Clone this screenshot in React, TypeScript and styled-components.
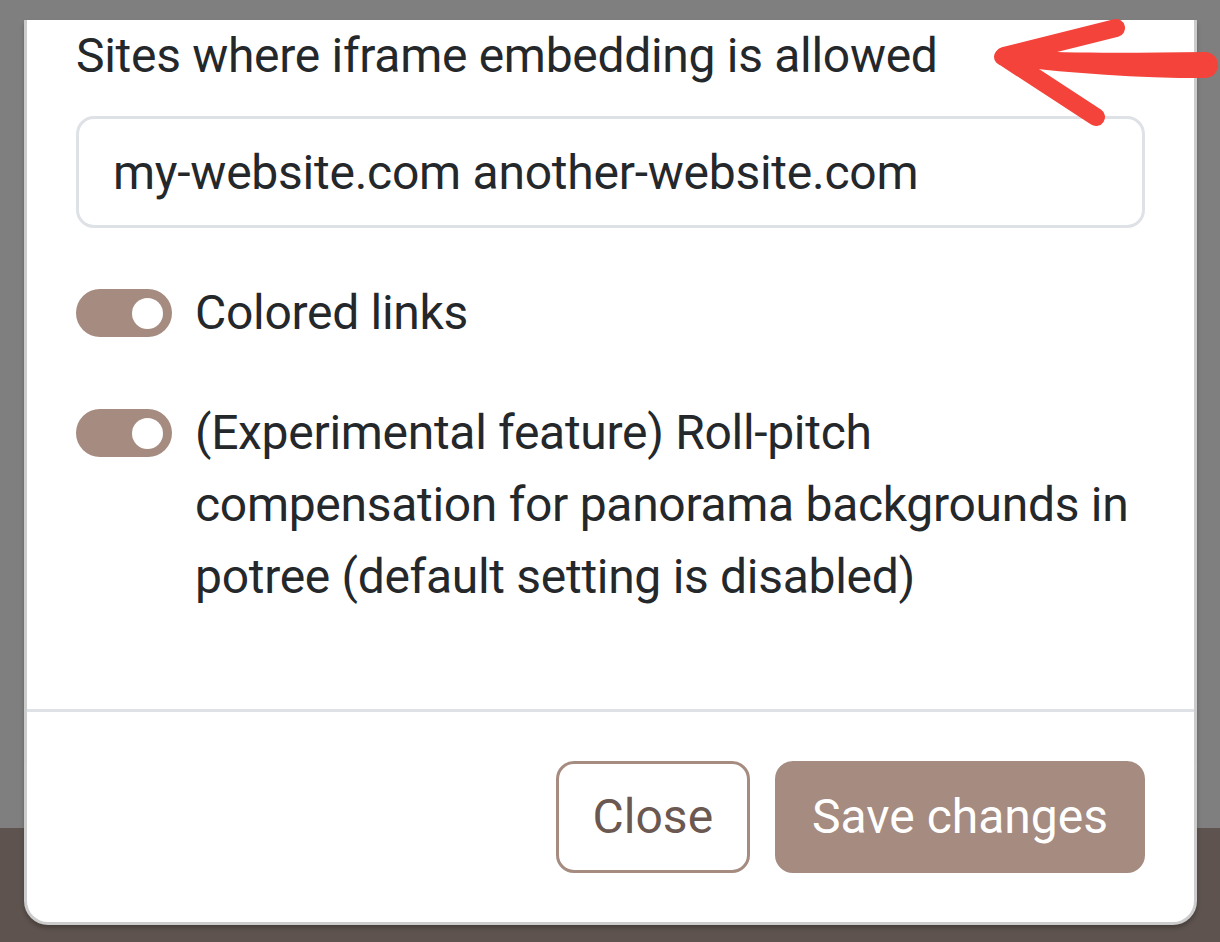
import React from "react";
import styled, { createGlobalStyle } from "styled-components";

const GlobalStyle = createGlobalStyle`
  html, body { margin: 0; padding: 0; }
  body { font-family: Roboto, "Liberation Sans", Arial, sans-serif; }
  * { box-sizing: border-box; }
`;

const Page = styled.div`
  position: relative;
  width: 1220px;
  height: 942px;
  overflow: hidden;
  display: flex;
  flex-direction: column;
`;

const Backdrop = styled.div`
  flex: 1;
  background: #7f7f7f;
`;

const FooterBand = styled.div`
  height: 114px;
  background: #5e534e;
`;

const Modal = styled.div`
  position: absolute;
  left: 24px;
  width: 1173px;
  bottom: 17px;
  background: #fff;
  border: 3px solid rgba(0, 0, 0, 0.2);
  border-top: none;
  border-radius: 0 0 24px 24px;
  display: flex;
  flex-direction: column;
  color: #25282b;
  font-size: 48px;
  line-height: 72px;
  box-shadow: 0 3px 4px rgba(0, 0, 0, 0.25);
`;

const Body = styled.div`
  padding: 0 49px 96px 49px;
  display: flex;
  flex-direction: column;
  letter-spacing: -0.3px;
`;

const Label = styled.label`
  display: block;
  margin-bottom: 24px;
`;

const TextInput = styled.input`
  display: block;
  width: 100%;
  height: 112px;
  padding: 0 34px;
  border: 3px solid #dee2e6;
  border-radius: 18px;
  font-family: inherit;
  font-size: 48px;
  letter-spacing: -0.25px;
  color: #25282b;
  background: #fff;
  outline: none;
  margin-bottom: 49px;
`;

const CheckRow = styled.div<{ $last?: boolean }>`
  display: flex;
  align-items: flex-start;
  gap: 23px;
  margin-bottom: ${(p) => (p.$last ? "0" : "48px")};
`;

const Switch = styled.span`
  flex: none;
  position: relative;
  width: 96px;
  height: 48px;
  margin-top: 12px;
  border-radius: 24px;
  background: #a58b80;
  &::after {
    content: "";
    position: absolute;
    right: 9px;
    top: 8.5px;
    width: 31px;
    height: 31px;
    border-radius: 50%;
    background: #fff;
  }
`;

const CheckText = styled.span`
  flex: 1;
`;

const Footer = styled.div`
  border-top: 3px solid #dee2e6;
  padding: 49px;
  display: flex;
  justify-content: flex-end;
  gap: 25px;
`;

const Button = styled.button<{ $primary?: boolean }>`
  height: 112px;
  padding: 0 34px;
  border-radius: 18px;
  border: 3px solid #a58b80;
  background: ${(p) => (p.$primary ? "#a58b80" : "#fff")};
  color: ${(p) => (p.$primary ? "#fff" : "#6b5850")};
  font-family: inherit;
  font-size: 48px;
  line-height: 72px;
  cursor: pointer;
`;

const Annotation = styled.svg`
  position: absolute;
  left: 0;
  top: 0;
  pointer-events: none;
`;

export default function App() {
  return (
    <>
      <GlobalStyle />
      <Page>
        <Backdrop />
        <FooterBand />
        <Modal>
          <Body>
            <Label>Sites where iframe embedding is allowed</Label>
            <TextInput readOnly value="my-website.com another-website.com" />
            <CheckRow>
              <Switch />
              <CheckText>Colored links</CheckText>
            </CheckRow>
            <CheckRow $last>
              <Switch />
              <CheckText>
                (Experimental feature) Roll-pitch compensation for panorama
                backgrounds in potree (default setting is disabled)
              </CheckText>
            </CheckRow>
          </Body>
          <Footer>
            <Button>Close</Button>
            <Button $primary>Save changes</Button>
          </Footer>
        </Modal>
        <Annotation width="1220" height="942" viewBox="0 0 1220 942">
          <g fill="none" stroke="#f4433a" strokeLinecap="round">
            <line x1="1004" y1="56" x2="1116" y2="28" strokeWidth="18" />
            <line x1="1004" y1="57" x2="1096" y2="117" strokeWidth="18" />
          </g>
          <path
            d="M 1002 49 C 1060 54, 1130 53, 1205 52 A 13 13 0 0 1 1205 78 C 1130 78, 1060 72, 1002 65 A 8 8 0 0 1 1002 49 Z"
            fill="#f4433a"
          />
        </Annotation>
      </Page>
    </>
  );
}
